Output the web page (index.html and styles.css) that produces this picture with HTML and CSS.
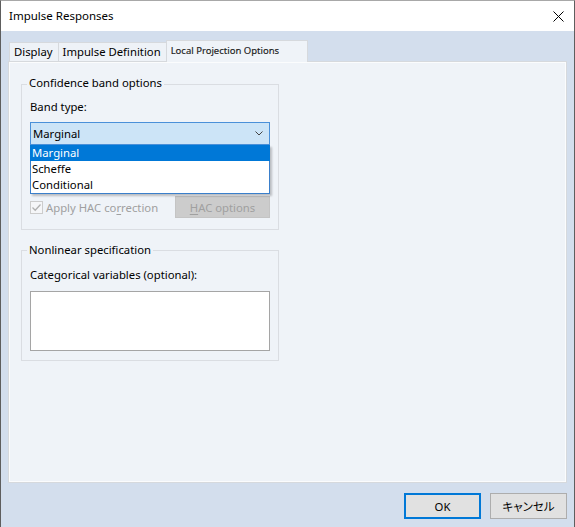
FILE: index.html
```html
<!DOCTYPE html>
<html>
<head>
<meta charset="utf-8">
<title>Impulse Responses</title>
<link rel="stylesheet" href="styles.css">
</head>
<body>
<div class="window">
  <div class="titlebar">
    <span class="title">Impulse Responses</span>
    <svg class="close" width="11" height="11" viewBox="0 0 11 11"><path d="M0.5 0.5 L10.5 10.5 M10.5 0.5 L0.5 10.5" stroke="#000" stroke-width="1" fill="none"/></svg>
  </div>
  <div class="client">
    <div class="tabs">
      <div class="tab">Display</div>
      <div class="tab">Impulse Definition</div>
      <div class="tab active">Local Projection Options</div>
    </div>
    <div class="panel">
      <div class="group g1">
        <div class="group-title">Confidence band options</div>
        <div class="label band-label">Band type:</div>
        <div class="combo-wrap">
          <div class="combo">
            <span>Marginal</span>
            <svg class="chev" width="8" height="5" viewBox="0 0 8 5"><path d="M0.5 0.5 L4 4 L7.5 0.5" stroke="#444" stroke-width="1" fill="none"/></svg>
          </div>
          <ul class="dropdown">
            <li class="sel">Marginal</li>
            <li>Scheffe</li>
            <li>Conditional</li>
          </ul>
        </div>
        <div class="hac-row">
          <div class="check">
            <span class="box"><svg width="11" height="11" viewBox="0 0 11 11"><path d="M1.5 5.5 L4.2 8.2 L9.5 2.5" stroke="#b0b0b0" stroke-width="1.3" fill="none"/></svg></span>
            <span class="check-label">Apply HAC co<u>r</u>rection</span>
          </div>
          <div class="btn-disabled"><u>H</u>AC options</div>
        </div>
      </div>
      <div class="group g2">
        <div class="group-title">Nonlinear specification</div>
        <div class="label cat-label">Categorical variables (optional):</div>
        <div class="textbox"></div>
      </div>
    </div>
    <div class="footer">
      <div class="btn default">OK</div>
      <div class="btn cancel">キャンセル</div>
    </div>
  </div>
</div>
</body>
</html>
```

FILE: styles.css
```css
html, body {
  margin: 0;
  padding: 0;
  overflow: hidden;
}
body {
  font-family: "Noto Sans", sans-serif;
  font-size: 11.3px;
  color: #000;
}
.window {
  width: 575px;
  height: 527px;
  box-sizing: border-box;
  border-left: 1px solid #5e5e5e;
  border-right: 1px solid #5e5e5e;
  border-top: 1px solid #a8a8a8;
  display: flex;
  flex-direction: column;
  background: #d3deed;
}
.titlebar {
  height: 30px;
  flex: none;
  background: #fff;
  display: flex;
  align-items: center;
  justify-content: space-between;
  padding: 0 10px 0 8px;
}
.title {
  font-size: 11.5px;
  line-height: 16px;
}
.close {
  display: block;
}
.client {
  flex: 1;
  display: flex;
  flex-direction: column;
  padding: 9px 7px 8px 7px;
  min-height: 0;
}
.tabs {
  display: flex;
  align-items: flex-end;
  height: 21px;
  padding-left: 1px;
  position: relative;
  z-index: 1;
  flex: none;
}
.tab {
  height: 19px;
  box-sizing: border-box;
  border: 1px solid #d6d9dd;
  border-bottom: none;
  background: #eef2f7;
  padding: 0 5px 0 4px;
  line-height: 18px;
  margin-right: -1px;
  white-space: nowrap;
}
.tab.active {
  height: 22px;
  margin-bottom: -1px;
  background: #eff3f8;
  width: 142px;
  font-size: 9.5px;
  line-height: 15px;
  padding: 2px 0 0 4px;
  color: #1a1a1a;
  -webkit-text-stroke: 0.15px #1a1a1a;
}
.panel {
  flex: 1;
  min-height: 0;
  border: 1px solid #d6d9dd;
  background: #eff3f8;
  box-shadow: inset 0 0 0 1px #fbfcfd;
  padding: 22px 0 0 12px;
}
.group {
  width: 258px;
  box-sizing: border-box;
  border: 1px solid #dadde2;
  padding: 0 8px;
}
.g1 {
  padding-bottom: 11px;
}
.g2 {
  margin-top: 20px;
  padding-bottom: 9px;
}
.group-title {
  width: max-content;
  margin: -10px 0 0 -3px;
  padding: 0 2px;
  line-height: 16px;
  background: #eff3f8;
}
.g2 .group-title {
  margin-top: -9px;
}
.label {
  line-height: 16px;
}
.band-label {
  margin-top: 8px;
}
.cat-label {
  margin-top: 9px;
}
.combo-wrap {
  position: relative;
  margin-top: 7px;
}
.combo {
  height: 23px;
  box-sizing: border-box;
  border: 1px solid #4a90d9;
  background: #cce4f7;
  display: flex;
  align-items: center;
  justify-content: space-between;
  padding: 0 6px 0 2px;
}
.chev {
  display: block;
}
.dropdown {
  position: absolute;
  left: 0;
  right: 0;
  top: 100%;
  margin: 0;
  padding: 0;
  list-style: none;
  background: #fff;
  border: 1px solid #3a7fcb;
  border-top: none;
  box-shadow: 2px 2px 2px rgba(0, 0, 0, 0.22);
  z-index: 2;
}
.dropdown li {
  height: 16px;
  line-height: 16px;
  padding-left: 1px;
}
.dropdown li.sel {
  background: #0078d7;
  color: #fff;
  margin: 0 -1px;
  padding-left: 2px;
}
.hac-row {
  margin-top: 51px;
  height: 22px;
  display: flex;
  align-items: center;
  justify-content: space-between;
}
.check {
  display: flex;
  align-items: center;
  color: #a0a0a0;
}
.box {
  width: 13px;
  height: 13px;
  box-sizing: border-box;
  border: 1px solid #cccccc;
  background: #f5f6f8;
  display: flex;
  align-items: center;
  justify-content: center;
  margin-right: 3px;
}
.box svg {
  display: block;
}
.check-label u, .btn-disabled u {
  text-decoration-thickness: 1px;
  text-underline-offset: 2px;
}
.btn-disabled {
  width: 95px;
  height: 22px;
  box-sizing: border-box;
  background: #cccccc;
  border: 1px solid #c4c4c4;
  color: #a0a0a0;
  display: flex;
  align-items: center;
  justify-content: center;
}
.textbox {
  margin-top: 8px;
  height: 60px;
  box-sizing: border-box;
  border: 1px solid #a5a5a5;
  background: #fff;
}
.footer {
  flex: none;
  display: flex;
  justify-content: flex-end;
  gap: 9px;
  margin-top: 10px;
}
.btn {
  width: 77px;
  height: 26px;
  box-sizing: border-box;
  background: #e1e1e1;
  border: 1px solid #adadad;
  display: flex;
  align-items: center;
  justify-content: center;
}
.btn.default {
  border: 2px solid #0078d7;
}
.btn.cancel {
  font-family: "Noto Sans CJK JP", sans-serif;
  font-size: 11.5px;
  font-feature-settings: "palt";
}
```
